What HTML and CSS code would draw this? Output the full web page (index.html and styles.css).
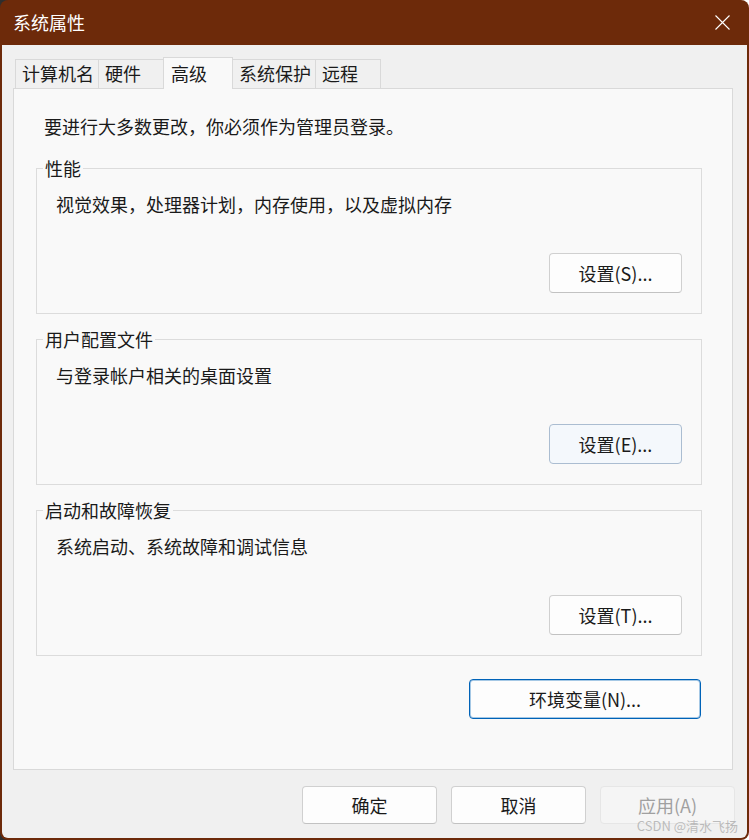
FILE: index.html
```html
<!DOCTYPE html>
<html lang="zh-CN">
<head>
  <meta charset="UTF-8" />
  <title>系统属性</title>
  <link rel="stylesheet" href="styles.css">
</head>
<body>
  <div class="window">
    <!-- Title bar -->
    <div class="titlebar">
      <span class="title">系统属性</span>
      <svg class="close" width="15" height="15" viewBox="0 0 15 15">
        <path d="M0.5 0.5 L14.5 14.5 M14.5 0.5 L0.5 14.5" stroke="#fff" stroke-width="1.1" fill="none"/>
      </svg>
    </div>

    <div class="client">
      <div class="tabs">
        <div class="tab">计算机名</div>
        <div class="tab">硬件</div>
        <div class="tab active">高级</div>
        <div class="tab">系统保护</div>
        <div class="tab">远程</div>
      </div>

      <div class="panel">
        <p class="intro">要进行大多数更改，你必须作为管理员登录。</p>

        <fieldset class="group">
          <legend>性能</legend>
          <div class="group-body">
            <p class="desc">视觉效果，处理器计划，内存使用，以及虚拟内存</p>
            <button class="btn settings">设置(S)...</button>
          </div>
        </fieldset>

        <fieldset class="group">
          <legend>用户配置文件</legend>
          <div class="group-body">
            <p class="desc">与登录帐户相关的桌面设置</p>
            <button class="btn settings hover">设置(E)...</button>
          </div>
        </fieldset>

        <fieldset class="group">
          <legend>启动和故障恢复</legend>
          <div class="group-body">
            <p class="desc">系统启动、系统故障和调试信息</p>
            <button class="btn settings">设置(T)...</button>
          </div>
        </fieldset>

        <div class="env-row">
          <button class="btn env">环境变量(N)...</button>
        </div>
      </div>

      <div class="footer">
        <button class="btn action">确定</button>
        <button class="btn action">取消</button>
        <button class="btn action" disabled>应用(A)</button>
      </div>
    </div>

    <span class="watermark">CSDN @清水飞扬</span>
  </div>
</body>
</html>
```

FILE: styles.css
```css
html {
  background: linear-gradient(to right, #2e2e2e 50%, #ffffff 50%);
}

body {
  margin: 0;
  font-family: "Noto Sans CJK SC", "Noto Sans", sans-serif;
  font-size: 18px;
  color: #1a1a1a;
}

.window {
  position: relative;
  width: 749px;
  height: 840px;
  display: flex;
  flex-direction: column;
  background: #6d2a0a;
  border-radius: 8px;
  overflow: hidden;
}

.titlebar {
  flex: none;
  height: 45px;
  display: flex;
  align-items: center;
  justify-content: space-between;
  padding: 0 19px 1px 13px;
  box-sizing: border-box;
}

.title {
  color: #ffffff;
  line-height: 24px;
}

.close {
  display: block;
}

.client {
  flex: 1;
  margin: 0 2px 2px;
  background: #f0f0f0;
  padding: 12px 14px 0 11px;
  border-radius: 0 0 6px 6px;
}

/* Tabs */
.tabs {
  display: flex;
  align-items: flex-end;
  height: 31px;
  margin-left: 2px;
}

.tab {
  height: 29px;
  min-width: 66px;
  box-sizing: border-box;
  padding: 0 4px 0 6px;
  border: 1px solid #d9d9d9;
  border-bottom: none;
  background: #f0f0f0;
  line-height: 27px;
  margin-left: -1px;
}

.tab:first-child {
  margin-left: 0;
}

.tab.active {
  position: relative;
  z-index: 1;
  height: 32px;
  min-width: 70px;
  padding-left: 7px;
  margin-bottom: -1px;
  background: #f9f9f9;
  line-height: 30px;
}

/* Panel */
.panel {
  height: 682px;
  box-sizing: border-box;
  border: 1px solid #d9d9d9;
  background: #f9f9f9;
  padding: 25px 30px 0 22px;
}

.intro {
  margin: 0 0 18px 8px;
  line-height: 24px;
}

.group {
  margin: 0 0 13px;
  padding: 0 0 20px;
  border: 1px solid #dcdcdc;
  min-width: 0;
}

.group legend {
  margin-left: 6px;
  padding: 0 2px;
  line-height: 24px;
}

.group-body {
  display: flex;
  flex-direction: column;
}

.desc {
  margin: 12px 0 0 19px;
  line-height: 24px;
}

/* Buttons */
.btn {
  font-family: inherit;
  font-size: 18px;
  color: #1a1a1a;
  background: #fdfdfd;
  border: 1px solid #d0d0d0;
  border-bottom-color: #c2c2c2;
  border-radius: 4px;
  padding: 0;
  box-sizing: border-box;
}

.settings {
  align-self: flex-end;
  width: 133px;
  height: 40px;
  margin: 37px 19px 0 0;
}

.settings.hover {
  background: #f4f8fc;
  border-color: #abbdd1;
}

.env-row {
  display: flex;
  justify-content: flex-end;
  margin: 23px 1px 0 0;
}

.env {
  width: 232px;
  height: 40px;
  border: 1px solid #0063b8;
  box-shadow: inset 0 0 0 1px rgba(0, 99, 184, 0.35);
}

.footer {
  display: flex;
  justify-content: flex-end;
  gap: 14px;
  margin: 16px -2px 0 0;
}

.action {
  width: 135px;
  height: 38px;
}

.action:disabled {
  background: #f5f5f5;
  border-color: #e6e6e6;
  color: #a0a0a0;
}

.watermark {
  position: absolute;
  right: 11px;
  bottom: 6px;
  font-size: 13px;
  line-height: 16px;
  color: rgba(150, 150, 150, 0.6);
}
```
